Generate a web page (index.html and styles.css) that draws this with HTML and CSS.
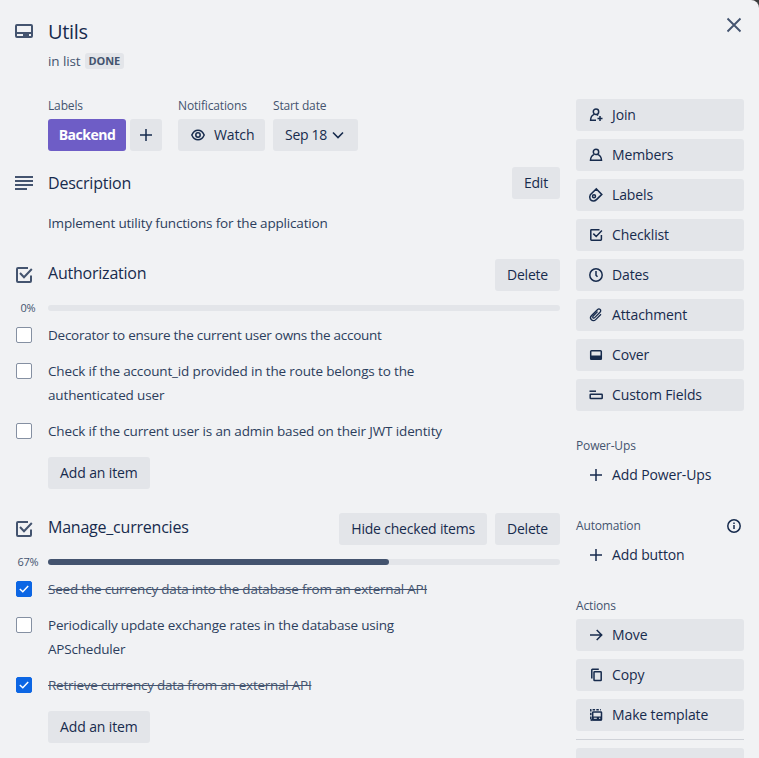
FILE: index.html
```
<!DOCTYPE html>
<html lang="en">
<head>
<meta charset="utf-8">
<title>Utils</title>
<link rel="stylesheet" href="styles.css">
</head>
<body>
<div class="card">
  <button class="close" aria-label="Close"><svg width="16" height="16" viewBox="0 0 16 16"><path d="M1.500 1.500l13 13M14.500 1.500l-13 13" stroke-width="1.900"/></svg></button>
  <header class="top">
    <svg class="head-icon" width="18" height="14" viewBox="0 0 18 14"><rect x="1" y="1" width="16" height="12" rx="1" stroke-width="2"/><path class="solid" d="M1 8h16v5H1z"/><path class="hole" d="M2 10h6v2H2zM14 10h2v2h-2z"/></svg>
    <div>
      <h1>Utils</h1>
      <p class="in-list">in list <span class="list-tag">DONE</span></p>
    </div>
  </header>
  <div class="columns">
    <main>
      <div class="meta">
        <div><h3>Labels</h3><div class="pair"><span class="label">Backend</span><button class="btn plus"><svg width="12" height="12" viewBox="0 0 12 12"><path d="M6 0v12M0 6h12"/></svg></button></div></div>
        <div class="notify"><h3>Notifications</h3><button class="btn watch"><svg width="14" height="12" viewBox="0 0 14 12"><path d="M.8 6C2.2 2.800 4.300 1.200 7 1.200S11.800 2.800 13.200 6C11.800 9.200 9.700 10.800 7 10.800S2.200 9.200.8 6z"/><circle cx="7" cy="6" r="2.200"/></svg>Watch</button></div>
        <div class="date"><h3>Start date</h3><button class="btn start">Sep 18<svg width="12" height="8" viewBox="0 0 12 8"><path d="M1 1.500l5 5 5-5" stroke-width="1.600"/></svg></button></div>
      </div>

      <section class="description">
        <div class="head">
          <svg class="lines" width="18" height="14" viewBox="0 0 18 14"><path d="M0 1h18M0 5h18M0 9h18M0 13h12" stroke-width="2"/></svg>
          <h2>Description</h2><button class="btn">Edit</button>
        </div>
        <p>Implement utility functions for the application</p>
      </section>

      <section class="checklist first">
        <div class="head">
          <svg class="check-icon" width="18" height="18" viewBox="0 0 18 18"><path d="M13 2H3a1 1 0 0 0-1 1v12a1 1 0 0 0 1 1h12a1 1 0 0 0 1-1V9.500M5 7l4 4.200 7.800-8.200" stroke-width="2"/></svg>
          <h2>Authorization</h2><button class="btn">Delete</button>
        </div>
        <div class="progress"><span>0%</span><div class="bar"></div></div>
        <ul>
          <li class="tight"><i class="box"></i><span>Decorator to ensure the current user owns the account</span></li>
          <li class="loose"><i class="box"></i><span>Check if the account_id provided in the route belongs to the<br>authenticated user</span></li>
          <li class="loose"><i class="box"></i><span>Check if the current user is an admin based on their JWT identity</span></li>
        </ul>
        <button class="btn add">Add an item</button>
      </section>

      <section class="checklist">
        <div class="head">
          <svg class="check-icon" width="18" height="18" viewBox="0 0 18 18"><path d="M13 2H3a1 1 0 0 0-1 1v12a1 1 0 0 0 1 1h12a1 1 0 0 0 1-1V9.500M5 7l4 4.200 7.800-8.200" stroke-width="2"/></svg>
          <h2>Manage_currencies</h2><button class="btn">Hide checked items</button><button class="btn">Delete</button>
        </div>
        <div class="progress"><span>67%</span><div class="bar"><div class="fill"></div></div></div>
        <ul>
          <li class="done"><i class="box"><svg width="10" height="8" viewBox="0 0 10 8"><path d="M.8 4l3 2.800L9.200 1"/></svg></i><span>Seed the currency data into the database from an external API</span></li>
          <li><i class="box"></i><span>Periodically update exchange rates in the database using<br>APScheduler</span></li>
          <li class="done tight"><i class="box"><svg width="10" height="8" viewBox="0 0 10 8"><path d="M.8 4l3 2.800L9.200 1"/></svg></i><span>Retrieve currency data from an external API</span></li>
        </ul>
        <button class="btn add">Add an item</button>
      </section>
    </main>

    <aside>
      <nav>
        <button class="btn"><svg viewBox="0 0 16 16"><circle cx="8" cy="4.700" r="2.700"/><path d="M6.200 7.400C3.800 8.300 2.700 10.300 2.600 13.200H8M8.800 7.600l1.400.8M12 9v5M9.500 11.500h5"/></svg>Join</button>
        <button class="btn"><svg viewBox="0 0 16 16"><circle cx="8" cy="4.900" r="2.700"/><path d="M6 7.600C3.800 8.300 2.700 10 2.500 13.200h11C13.300 10 12.200 8.300 10 7.600"/></svg>Members</button>
        <button class="btn"><svg viewBox="0 0 16 16"><path d="M2.300 7.800L8.300 1.900l5.500 5.500L8.500 12.600C6.500 14.600 3.600 14.300 2.300 12.500 1.500 11.200 1.500 9.200 2.300 7.800z"/><circle cx="6" cy="9.300" r="1.500"/></svg>Labels</button>
        <button class="btn"><svg viewBox="0 0 16 16"><path d="M11.500 2.700h-8a.7.7 0 0 0-.7.700v9.200c0 .4.300.7.7.7h9.200c.4 0 .7-.3.700-.7V8M5.300 6.600l2.900 2.900 5.700-6"/></svg>Checklist</button>
        <button class="btn"><svg viewBox="0 0 16 16"><circle cx="8" cy="8" r="6.200"/><path d="M8 4v4.200l1.500 1.600"/></svg>Dates</button>
        <button class="btn"><svg viewBox="0 0 16 16"><path stroke-width="1.300" d="M9.600 4.600L5.200 9c-1.300 1.300.2 2.900 1.500 1.600L12 5.300c2-2-.6-4.600-2.600-2.600L3.600 8.500c-3 3 1.100 7.100 4.100 4.100L13 7.300"/></svg>Attachment</button>
        <button class="btn"><svg viewBox="0 0 16 16"><rect x="2.700" y="3.700" width="10.600" height="8.600" rx=".8"/><path class="solid" d="M2.500 8.500h11v4h-11z"/></svg>Cover</button>
        <button class="btn"><svg viewBox="0 0 16 16"><path d="M1.500 4.200H8"/><rect x="2.200" y="7.200" width="12" height="4.300" rx=".6"/></svg>Custom Fields</button>
      </nav>
      <h3>Power-Ups</h3>
      <button class="btn plain"><svg viewBox="0 0 16 16"><path d="M8 2v12M2 8h12"/></svg>Add Power-Ups</button>
      <h3>Automation<svg class="info" viewBox="0 0 16 16"><circle cx="8" cy="8" r="6.200"/><path d="M8 7v4M8 4.500v1.400"/></svg></h3>
      <button class="btn plain"><svg viewBox="0 0 16 16"><path d="M8 2v12M2 8h12"/></svg>Add button</button>
      <h3>Actions</h3>
      <nav>
        <button class="btn"><svg viewBox="0 0 16 16"><path d="M2 8h11.500M8.700 3l5 5-5 5"/></svg>Move</button>
        <button class="btn"><svg viewBox="0 0 16 16"><path d="M3.800 11.500V3c0-.4.200-.7.600-.7h6.400"/><rect x="6" y="4.700" width="7.200" height="8.800" rx=".6"/></svg>Copy</button>
        <button class="btn"><svg viewBox="0 0 16 16"><path stroke-dasharray="2.500 1.200" d="M2.800 12V2.700h10"/><path d="M2.500 12.500l2 1"/><rect x="4.700" y="5" width="8.800" height="8" rx=".6"/><path class="solid" d="M4.500 9.500h9v4h-9z"/><path class="hole" d="M5.800 10.800h3v1h-3zM11 10.800h1.300v1H11z"/></svg>Make template</button>
      </nav>
      <hr>
      <button class="btn last"></button>
    </aside>
  </div>
</div>
</body>
</html>
```
FILE: styles.css
```
* { box-sizing: border-box; }
html { background: #3b3b3b; }
body {
  margin: 0;
  height: 758px;
  overflow: hidden;
  color: #172b4d;
  font: 14px/20px "Open Sans", "Noto Sans", sans-serif;
}
.card {
  position: relative;
  height: 758px;
  overflow: hidden;
  background: #f1f2f4;
  border-top-right-radius: 8px;
}
h1, h2, h3, p, ul { margin: 0; padding: 0; }
h1, h2, h3 { font-weight: 500; }
svg { flex: none; fill: none; stroke: currentColor; stroke-width: 1.5; }
.solid { fill: currentColor; stroke: none; }
.hole { fill: #f1f2f4; stroke: none; }
button { border: 0; font: inherit; color: inherit; }
.close {
  position: absolute;
  top: 17px;
  right: 17px;
  display: flex;
  padding: 0;
  background: none;
  color: #44546f;
}
.top { display: flex; gap: 15px; padding: 20px 0 0 15px; height: 95px; }
.head-icon, .lines, .check-icon { color: #44546f; }
.head-icon { margin-top: 4px; }
h1 { font-size: 20px; line-height: 24px; letter-spacing: -.3px; }
.in-list { display: flex; align-items: center; gap: 4px; margin-top: 7px; color: #44546f; font-size: 13.5px; letter-spacing: -.1px; }
.list-tag {
  padding: 0 4px;
  border-radius: 3px;
  background: #e3e5e9;
  font-size: 11px;
  font-weight: 700;
  line-height: 16px;
  letter-spacing: -.1px;
}
.columns { display: flex; gap: 16px; padding-left: 16px; }
main { width: 544px; }
aside { width: 168px; padding-top: 4px; }
h3 { color: #44546f; font-size: 12px; line-height: 20px; letter-spacing: -.15px; }
.btn {
  display: flex;
  align-items: center;
  height: 32px;
  padding: 0 12px;
  border-radius: 3px;
  background: #e3e5e9;
  font-weight: 500;
  letter-spacing: -.12px;
  white-space: nowrap;
}
.meta { display: flex; padding-left: 32px; }
.meta h3 { padding-top: 1px; margin-bottom: 3px; }
.pair { display: flex; gap: 4px; }
.label {
  width: 78px;
  border-radius: 3px;
  background: #6e5dc6;
  color: #fff;
  font-weight: 700;
  line-height: 32px;
  text-align: center;
  letter-spacing: -.5px;
}
.plus { width: 32px; padding: 0 10px; }
.notify { margin-left: 16px; }
.date { margin-left: 8px; }
.watch { width: 87px; gap: 9px; padding: 0 13px; }
.start { width: 85px; gap: 5px; letter-spacing: -.3px; }
.head { display: flex; align-items: center; gap: 8px; height: 32px; }
.head h2 { flex: 1; margin-left: 8px; font-size: 16px; line-height: 20px; letter-spacing: -.22px; }
.head .btn { letter-spacing: -.2px; }
.head svg { width: 18px; margin: 0 -1px; }
.description { margin-top: 16px; }
.description p { padding: 14px 0 0 32px; font-size: 13.5px; letter-spacing: -.18px; color: #2c3e5d; }
.checklist { margin-top: 24px; }
.checklist.first { margin-top: 26px; }
.checklist h2 { position: relative; top: -2px; }
.progress { display: flex; align-items: center; height: 20px; margin-top: 7px; }
.progress span { width: 32px; padding-right: 8px; color: #44546f; font-size: 11px; text-align: center; letter-spacing: -.3px; }
.bar { flex: 1; height: 6px; border-radius: 3px; background: #e3e5e9; }
.fill { width: 66.67%; height: 6px; border-radius: 3px; background: #44546f; }
ul { list-style: none; margin-top: -1px; }
li { display: flex; gap: 16px; padding: 6px 0; font-size: 13.5px; line-height: 24px; letter-spacing: -.2px; color: #2c3e5d; }
.tight { letter-spacing: -.25px; }
.loose { letter-spacing: -.145px; }
.box {
  display: flex;
  align-items: center;
  justify-content: center;
  width: 16px;
  height: 16px;
  margin-top: 4px;
  border: 1px solid #8590a2;
  border-radius: 2px;
  background: #fff;
}
.done { color: #44546f; }
.done span { text-decoration: line-through; }
.done .box { border-color: #0c66e4; background: #0c66e4; color: #fff; }
.add { margin: 8px 0 0 32px; }
nav { display: grid; gap: 8px; }
aside .btn { width: 168px; gap: 8px; }
aside .btn svg, .info { width: 16px; height: 16px; }
aside .plain { background: none; }
aside h3 { display: flex; justify-content: space-between; align-items: center; margin: 25px 0 3px; }
.info { margin-right: 2px; color: #172b4d; }
hr { height: 1px; margin: 8px 0; border: 0; background: #cfd2d8; }
```
